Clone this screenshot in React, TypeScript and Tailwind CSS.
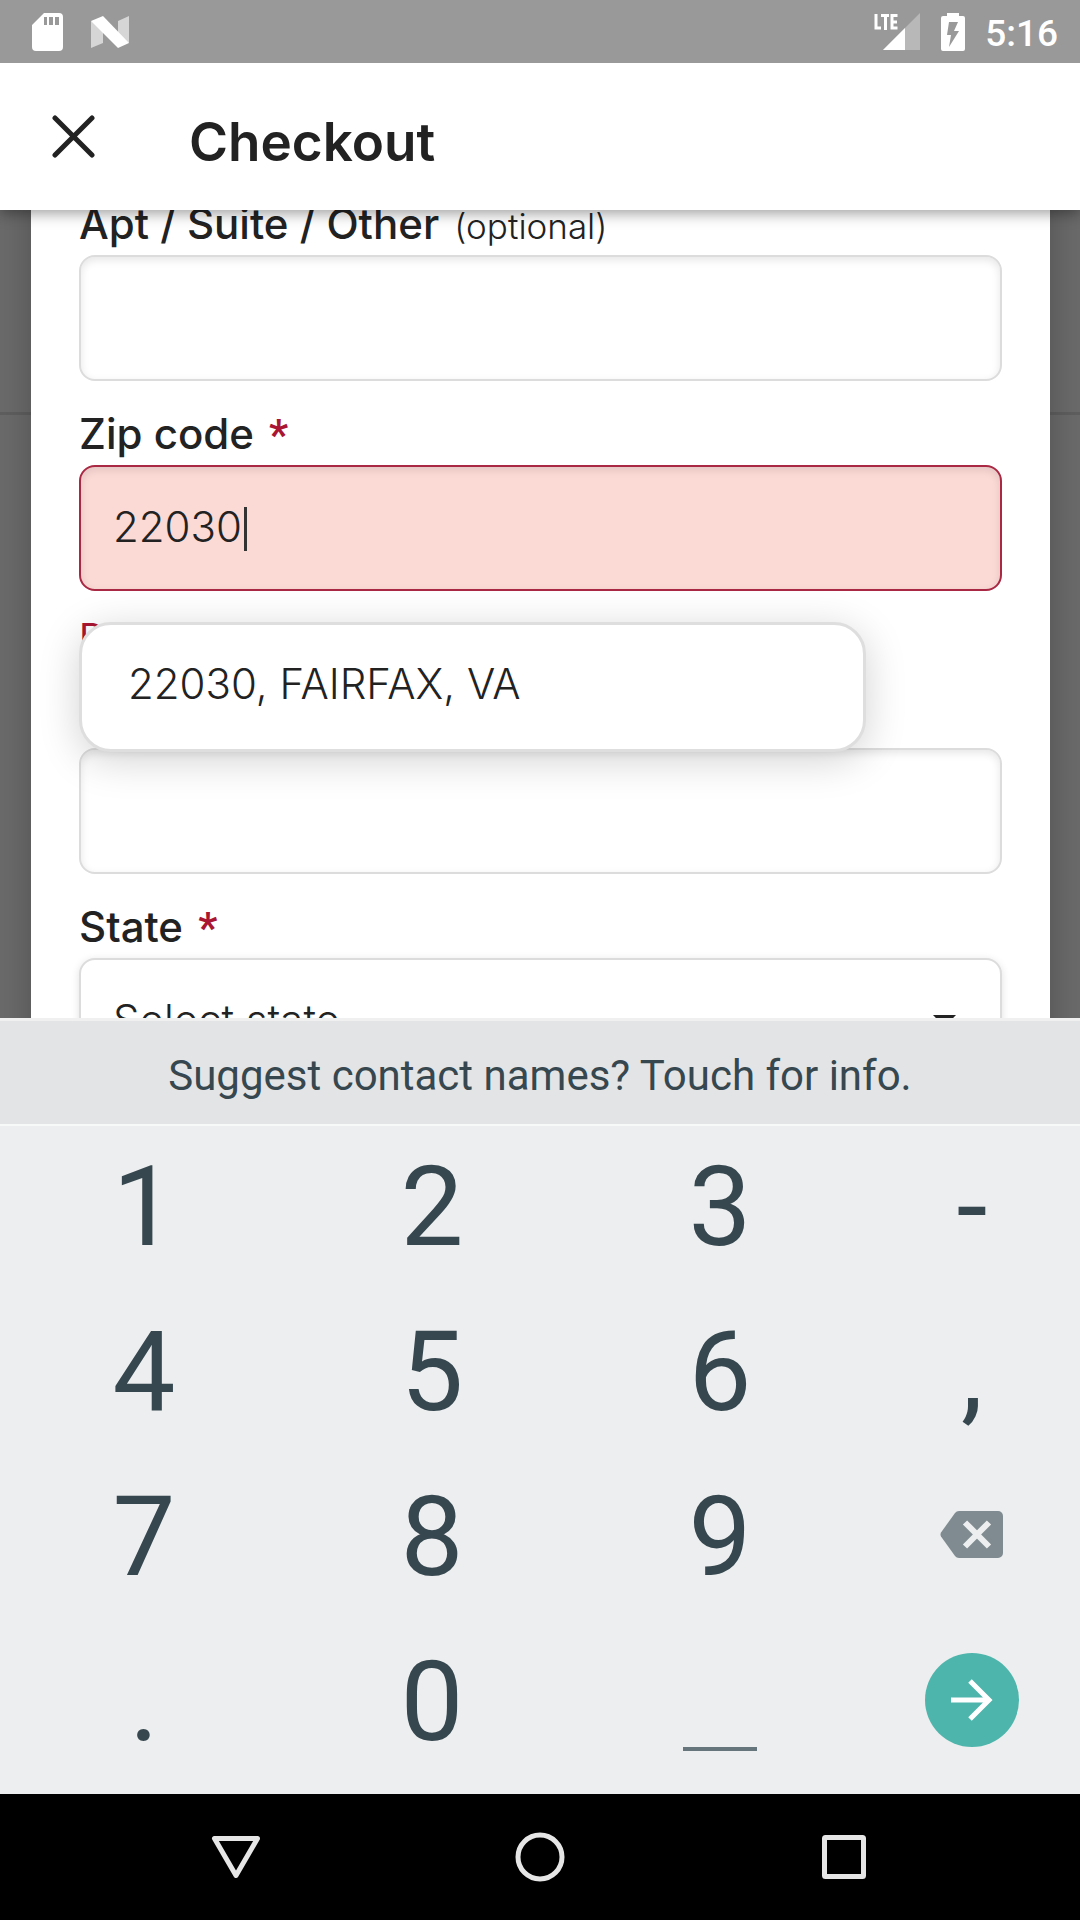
import React from "react";

const fieldBase =
  "block w-full h-[126px] rounded-2xl border-2 px-8 pb-1 text-[42px] font-[350] text-[#222]";

function Required() {
  return (
    <span className="ml-1 font-[Roboto,sans-serif] font-bold text-[#aa1532]">
      *
    </span>
  );
}

function StatusBar() {
  return (
    <div className="relative z-20 flex h-[63px] shrink-0 items-center bg-[#999] pl-8 pr-[22px]">
      <svg width="31" height="38" viewBox="0 0 31 38" className="text-white">
        <path
          fill="currentColor"
          fillRule="evenodd"
          d="M12 0H27a4 4 0 0 1 4 4V34a4 4 0 0 1-4 4H4a4 4 0 0 1-4-4V12ZM12 4v8h3V4ZM17 4v8h4V4ZM23 4v8h4V4Z"
        />
      </svg>
      <svg width="39" height="32" viewBox="0 0 39 32" className="ml-7">
        <path fill="#d6d6d6" d="M0 5 12 10V27L0 32ZM27 5 38 0V27L27 22Z" />
        <path fill="#fff" d="M0 5 12 0 38 27 27 32Z" />
      </svg>
      <div className="ml-auto flex items-center">
        <svg width="46" height="38" viewBox="0 0 46 38">
          <path fill="#b8b8b8" d="M46 0V37H9Z" />
          <path fill="#fff" d="M31 15V37H9Z" />
          <path
            fill="none"
            stroke="#fff"
            strokeWidth="3"
            d="M2 1V15H7M7 2.500H15M11.500 2V17M23.500 2.500H18V15H23.500M18 9H23"
          />
        </svg>
        <svg width="24" height="38" viewBox="0 0 24 38" className="ml-[21px]">
          <path
            fill="#fff"
            fillRule="evenodd"
            d="M6 0H18V3H22a2 2 0 0 1 2 2V36a2 2 0 0 1-2 2H2a2 2 0 0 1-2-2V5a2 2 0 0 1 2-2H6ZM8 9 6 22H10L8 34 18 18H13L17 9Z"
          />
        </svg>
        <span className="ml-5 pt-1 font-[Roboto,sans-serif] text-[37px] font-medium leading-none text-white">
          5:16
        </span>
      </div>
    </div>
  );
}

function Header() {
  return (
    <header className="relative z-10 flex h-[147px] shrink-0 items-center bg-white pl-[52px] shadow-[0_3px_14px_rgba(0,0,0,0.4)]">
      <button type="button" aria-label="Close">
        <svg width="43" height="43" viewBox="0 0 43 43">
          <path
            d="M3 3 40 40M40 3 3 40"
            stroke="#222"
            strokeWidth="5"
            strokeLinecap="round"
          />
        </svg>
      </button>
      <h1 className="ml-[94px] pt-[10px] text-[53px] font-semibold leading-[60px] text-[#222]">
        Checkout
      </h1>
    </header>
  );
}

function Label({ id, children }: { id: string; children: React.ReactNode }) {
  return (
    <label
      htmlFor={id}
      className="mb-[7px] mt-[29px] block h-12 whitespace-nowrap text-[42px] font-medium leading-[48px] text-[#222]"
    >
      {children}
    </label>
  );
}

function AddressForm() {
  return (
    <main className="relative flex-1 overflow-hidden bg-[#6b6b6b] pl-[31px] pr-[30px]">
      <div className="absolute inset-x-0 top-[202px] h-[3px] bg-[#5f5f5f]" />
      <form className="relative min-h-full bg-white px-12 shadow-[0_0_36px_rgba(0,0,0,0.25)]">
        <div className="-mt-[39px] overflow-visible pb-12">
          <div className="flow-root h-[84px]">
            <Label id="apt">
              Apt / Suite / Other{" "}
              <span className="ml-1 text-[35px] font-[350]">(optional)</span>
            </Label>
          </div>
          <input
            id="apt"
            className={`${fieldBase} border-[#dcdcdc] bg-white shadow-[inset_0_3px_8px_rgba(0,0,0,0.1)]`}
          />
          <Label id="zip">
            Zip code <Required />
          </Label>
          <div className="relative">
            <input
              id="zip"
              defaultValue="22030"
              inputMode="numeric"
              className={`${fieldBase} border-[#a92843] bg-[#fbd9d5] caret-transparent shadow-[inset_0_3px_8px_rgba(0,0,0,0.1)]`}
            />
            <span className="absolute left-[165px] top-[42px] h-[44px] w-[3px] bg-[#333]" />
            <ul className="absolute left-0 top-[157px] z-10 h-[130px] w-[calc(100%-136px)] rounded-[32px] border-[3px] border-[#dedede] bg-white shadow-[0_8px_40px_rgba(0,0,0,0.18)]">
              <li>
                <button
                  type="button"
                  className="block w-full px-[46px] py-[35px] text-left text-[42px] font-[350] leading-[48px] text-[#222]"
                >
                  22030, FAIRFAX, VA
                </button>
              </li>
            </ul>
          </div>
          <p className="mt-[22px] h-[51px] text-[38px] leading-[48px] text-[#aa1532]">
            Please enter your zip code
          </p>
          <Label id="city">
            City <Required />
          </Label>
          <input
            id="city"
            className={`${fieldBase} border-[#dcdcdc] bg-white shadow-[inset_0_3px_8px_rgba(0,0,0,0.1)]`}
          />
          <Label id="state">
            State <Required />
          </Label>
          <div className="relative">
            <select
              id="state"
              className={`${fieldBase} appearance-none border-[#dcdcdc] bg-white shadow-[0_2px_8px_rgba(0,0,0,0.12)]`}
            >
              <option>Select state</option>
            </select>
            <svg
              width="23"
              height="12"
              viewBox="0 0 23 12"
              className="pointer-events-none absolute right-[46px] top-[57px]"
            >
              <path fill="#222" d="M0 0H23L11.500 12Z" />
            </svg>
          </div>
        </div>
      </form>
    </main>
  );
}

function BackspaceIcon() {
  return (
    <svg width="64" height="48" viewBox="0 0 64 48">
      <path
        fill="#7f8b91"
        d="M19 0H58a5 5 0 0 1 5 5V42a5 5 0 0 1-5 5H19q-2.500 0-4-2L1 25.500q-1-2 0-4L15 2q1.500-2 4-2Z"
      />
      <path d="M25 11.500 49 35.500M49 11.500 25 35.500" stroke="#eceeef" strokeWidth="6" />
    </svg>
  );
}

const keyRows = [
  ["1", "2", "3", "-"],
  ["4", "5", "6", ","],
  ["7", "8", "9", "backspace"],
  [".", "0", "space", "next"],
];

function KeyFace({ name }: { name: string }) {
  if (name === "backspace") return <BackspaceIcon />;
  if (name === "space")
    return <span className="mt-[98px] block h-1 w-[74px] bg-[#66757b]" />;
  if (name === "next")
    return (
      <span className="flex size-[94px] items-center justify-center rounded-full bg-[#4eb5ac]">
        <svg width="42" height="42" viewBox="0 0 42 42">
          <path
            d="M0 21H38M19 2 38 21 19 40"
            fill="none"
            stroke="#fff"
            strokeWidth="5"
          />
        </svg>
      </span>
    );
  return <>{name}</>;
}

function Keyboard() {
  return (
    <section className="shrink-0 bg-[#eceeef] pb-2 font-[Roboto,sans-serif] text-[#37474f]">
      <button
        type="button"
        className="block h-[108px] w-full border-b-2 border-t-[3px] border-b-[#f7f8f8] border-t-[#f0f0f0] bg-[#e3e4e5] pt-1.5 text-center text-[42px] leading-none"
      >
        Suggest contact names? Touch for info.
      </button>
      <div className="grid auto-rows-[165px] grid-cols-[4fr_4fr_4fr_3fr]">
        {keyRows.flat().map((k) => (
          <button
            key={k}
            type="button"
            aria-label={k}
            className={
              k.length > 1
                ? "flex items-center justify-center pb-2"
                : "flex items-center justify-center pb-1 text-[112px] leading-none"
            }
          >
            <KeyFace name={k} />
          </button>
        ))}
      </div>
    </section>
  );
}

function NavBar() {
  return (
    <nav className="grid h-[126px] shrink-0 grid-cols-3 items-center justify-items-center bg-black px-21">
      <button type="button" aria-label="Back">
        <svg width="50" height="50" viewBox="0 0 50 50">
          <path
            d="M3.500 6.500H46.500L25 43.500Z"
            fill="none"
            stroke="#e6e6e6"
            strokeWidth="5"
            strokeLinejoin="round"
          />
        </svg>
      </button>
      <button type="button" aria-label="Home">
        <svg width="50" height="50" viewBox="0 0 50 50">
          <circle cx="25" cy="25" r="22" fill="none" stroke="#e6e6e6" strokeWidth="5" />
        </svg>
      </button>
      <button type="button" aria-label="Recent apps">
        <svg width="50" height="50" viewBox="0 0 50 50">
          <rect
            x="5.500"
            y="5.500"
            width="39"
            height="39"
            rx="1"
            fill="none"
            stroke="#e6e6e6"
            strokeWidth="5"
            strokeLinejoin="round"
          />
        </svg>
      </button>
    </nav>
  );
}

export default function App() {
  return (
    <div className="flex h-screen flex-col overflow-hidden bg-white font-[Inter,sans-serif]">
      <StatusBar />
      <Header />
      <AddressForm />
      <Keyboard />
      <NavBar />
    </div>
  );
}
